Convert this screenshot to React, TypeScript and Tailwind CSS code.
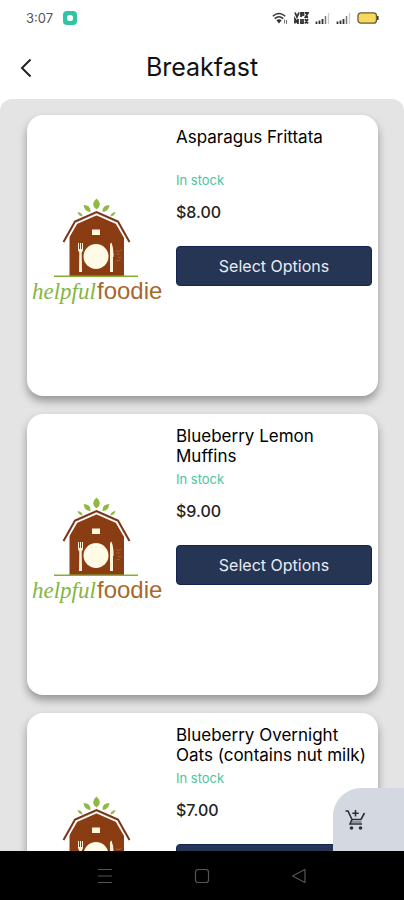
const products = [
  { id: "asparagus-frittata", name: "Asparagus Frittata", price: "$8.00" },
  { id: "blueberry-muffins", name: "Blueberry Lemon Muffins", price: "$9.00" },
  {
    id: "overnight-oats",
    name: "Blueberry Overnight Oats (contains nut milk)",
    price: "$7.00",
  },
];

type Product = (typeof products)[number];

function SignalIcon() {
  return (
    <svg viewBox="0 0 15 12" className="h-3 w-[15px]" aria-hidden>
      <path d="M1.5 9.5V12M4.5 8.5V12M7.5 7v5" stroke="#333" strokeWidth="1.8" />
      <path d="M10.5 4v8" stroke="#777" strokeWidth="1.5" />
      <path d="M13.5 1v11" stroke="#ccc" strokeWidth="1.3" />
    </svg>
  );
}

function StatusBar() {
  return (
    <div className="flex h-9 shrink-0 items-center justify-between pr-[25px] pl-[26px]">
      <div className="flex items-center gap-2.5">
        <span className="text-[13px] leading-4 text-[#555]">3:07</span>
        <svg viewBox="0 0 14 14" className="size-3.5" aria-hidden>
          <rect width="14" height="14" rx="4" fill="#2fc4a5" />
          <rect x="4" y="4" width="6" height="6" rx="2.5" fill="#fff" />
        </svg>
      </div>
      <div className="flex items-center gap-1.5">
        <svg viewBox="0 0 16 13" className="h-[13px] w-4" aria-hidden>
          <g fill="none" stroke="#333" strokeWidth="1.5">
            <path d="M.8 4.2q6.2-5.4 12.4 0" />
            <path d="M2.8 6.6q4.2-3.6 8.4 0" />
          </g>
          <path d="M4.4 8.3q2.6-2 5.2 0L7 11.6z" fill="#333" />
          <path d="M12.5 7.5v4M14.5 8v4" stroke="#777" />
        </svg>
        <svg viewBox="0 0 15 12" className="h-3 w-[15px]" aria-hidden>
          <g fill="none" stroke="#333" strokeWidth="1.8">
            <path d="M1 .5l2 4.5 2-4.5M7 5V1h2.5v2L7 3.5M11 1h3L11.5 5H14" />
            <path d="M1 11.5V7l3 4.5V7M7 7v4.5h2V7M11 7l3 4.5M14 7l-3 4.5" />
          </g>
        </svg>
        <SignalIcon />
        <SignalIcon />
        <svg viewBox="0 0 22 12" className="h-3 w-[22px]" aria-hidden>
          <rect
            x="1"
            y=".8"
            width="18.5"
            height="10.4"
            rx="3"
            fill="#f7d95c"
            stroke="#665c38"
            strokeWidth="1.3"
          />
          <path d="M20.8 4v4" stroke="#444" strokeWidth="1.6" />
        </svg>
      </div>
    </div>
  );
}

function FoodieLogo() {
  return (
    <svg
      viewBox="0 0 130 118"
      className="h-[118px] w-[130px] shrink-0"
      role="img"
      aria-label="helpful foodie"
    >
      {/* leaves */}
      <g fill="#8fba42">
        <path d="M64.500 1.500q-7 6 0 11 7-5 0-11z" />
        <path d="M51.500 8q1 7 7 7 .5-7-7-7z" />
        <path d="M77.500 8q-1 7-7 7-.5-7 7-7z" />
        <path d="M45.500 15q1 4 5 4.500 0-4-5-4.500z" />
        <path d="M83.500 15q-1 4-5 4.500 0-4 5-4.500z" />
      </g>
      {/* barn */}
      <path d="M37.5 79V37L45 25l19.500-8.500L84 25l8 12v42z" fill="#8a3c12" />
      <path
        d="M33 46L44.500 26.200l20-8.800 20 8.800L96 46"
        fill="none"
        stroke="#fff"
        strokeWidth="1.700"
      />
      <path
        d="M31.500 45L43 24.500l21.500-9.500L86 24.500 97.500 45"
        fill="none"
        stroke="#7a3418"
        strokeWidth="2"
      />
      <rect x="60" y="32.500" width="8" height="5.500" fill="#fff8dc" />
      {/* plate and cutlery */}
      <circle cx="64" cy="59.500" r="12.500" fill="#fffbe6" />
      <path
        d="M46 46v6q0 3 1.300 3.500L47 75h3l-.3-19.500Q51 55 51 52v-6h-1v6h-1v-6h-1v6h-1v-6z"
        fill="#fff3dc"
      />
      <path d="M78 75V48q0-2 1.500-2.500Q82 52 81.500 60H81v15z" fill="#fff3dc" />
      <path
        d="M84 53l2 2 3-2M84 57h4M86 60l3 1M84 64l4-1"
        stroke="#b77b53"
        strokeWidth=".6"
        fill="none"
      />
      <path d="M22 79.300h84" stroke="#82b135" strokeWidth="1.600" />
      <text
        x="0"
        y="102"
        className="font-['Liberation_Serif',cursive] text-[23px] italic"
        fill="#86b540"
      >
        helpful
      </text>
      <text
        x="65"
        y="102"
        className="font-['Liberation_Sans',sans-serif] text-[24px]"
        fill="#a8682c"
      >
        foodie
      </text>
    </svg>
  );
}

function CartIcon() {
  return (
    <svg viewBox="0 0 22 22" className="size-[22px]" aria-hidden>
      <g fill="none" stroke="currentColor" strokeWidth="1.6">
        <path d="M1.500 2H4l4 8.500h9L20.500 4" />
        <path d="M8 10.500l-2 4.500h12" />
        <path d="M7.500 13h10" strokeOpacity=".5" />
        <path d="M11.500 1v6.500M8.300 4.300h6.400" />
      </g>
      <circle cx="7.500" cy="19" r="1.800" fill="currentColor" />
      <circle cx="16.500" cy="19" r="1.800" fill="currentColor" />
    </svg>
  );
}

function ProductCard({ product }: { product: Product }) {
  return (
    <li className="flex h-[281px] shrink-0 rounded-2xl bg-white pr-1.5 pl-[5px] shadow-[0_5px_8px_rgba(0,0,0,0.35)]">
      <div className="flex items-center">
        <FoodieLogo />
      </div>
      <div className="min-w-0 flex-1 pt-3 pl-3.5">
        <h2 className="h-10 pr-1 text-[17px] leading-5 text-black">
          {product.name}
        </h2>
        <p className="mt-[3px] text-[13px] leading-5 text-[#4cc5a0]">
          In stock
        </p>
        <p className="mt-3 text-base leading-5 font-medium text-[#222]">
          {product.price}
        </p>
        <button
          type="button"
          className="mt-6 h-10 w-full rounded-sm border border-[#142452] bg-[#263553] text-base text-[#e8ebf2]"
        >
          Select Options
        </button>
      </div>
    </li>
  );
}

function SystemNav() {
  return (
    <nav
      aria-label="System"
      className="grid h-[49px] shrink-0 grid-cols-[97px_97px_97px] justify-center bg-black text-[#555]"
    >
      <button
        type="button"
        aria-label="Recent apps"
        className="flex items-center justify-center"
      >
        <svg viewBox="0 0 16 16" className="size-4" aria-hidden>
          <path d="M1 1.500h14M1 8h14M1 14.500h14" stroke="currentColor" />
        </svg>
      </button>
      <button
        type="button"
        aria-label="Home"
        className="flex items-center justify-center"
      >
        <svg viewBox="0 0 16 16" className="size-4" aria-hidden>
          <rect
            x="1.5"
            y="1.5"
            width="13"
            height="13"
            rx="2.5"
            fill="none"
            stroke="currentColor"
            strokeWidth="1.2"
          />
        </svg>
      </button>
      <button
        type="button"
        aria-label="Back"
        className="flex items-center justify-center"
      >
        <svg viewBox="0 0 16 16" className="size-4" aria-hidden>
          <path
            d="M14 1.500v13L1.500 8z"
            fill="none"
            stroke="currentColor"
            strokeWidth="1.2"
            strokeLinejoin="round"
          />
        </svg>
      </button>
    </nav>
  );
}

export default function App() {
  return (
    <div className="flex h-screen flex-col overflow-hidden bg-white font-['Inter',sans-serif]">
      <StatusBar />
      <header className="grid h-[63px] shrink-0 grid-cols-[52px_1fr_52px] items-center">
        <button
          type="button"
          aria-label="Go back"
          className="flex h-12 items-center pl-5"
        >
          <svg viewBox="0 0 12 20" className="h-5 w-3" aria-hidden>
            <path
              d="M10.500 1.500L2 10l8.500 8.500"
              fill="none"
              stroke="#222"
              strokeWidth="2"
            />
          </svg>
        </button>
        <h1 className="text-center text-[25px] text-[#111]">Breakfast</h1>
      </header>

      <main className="relative min-h-0 flex-1 overflow-hidden rounded-t-xl bg-[#e4e4e4]">
        <ul className="flex h-full flex-col gap-[18px] overflow-y-auto pt-4 pr-[26px] pl-[27px] [scrollbar-width:none]">
          {products.map((p) => (
            <ProductCard key={p.id} product={p} />
          ))}
        </ul>
        <button
          type="button"
          aria-label="Open cart"
          className="absolute right-0 bottom-0 flex h-[63px] w-[71px] items-center rounded-tl-[28px] bg-[#d4d8e0] pl-[11px] text-[#2c2f36]"
        >
          <CartIcon />
        </button>
      </main>

      <SystemNav />
    </div>
  );
}
